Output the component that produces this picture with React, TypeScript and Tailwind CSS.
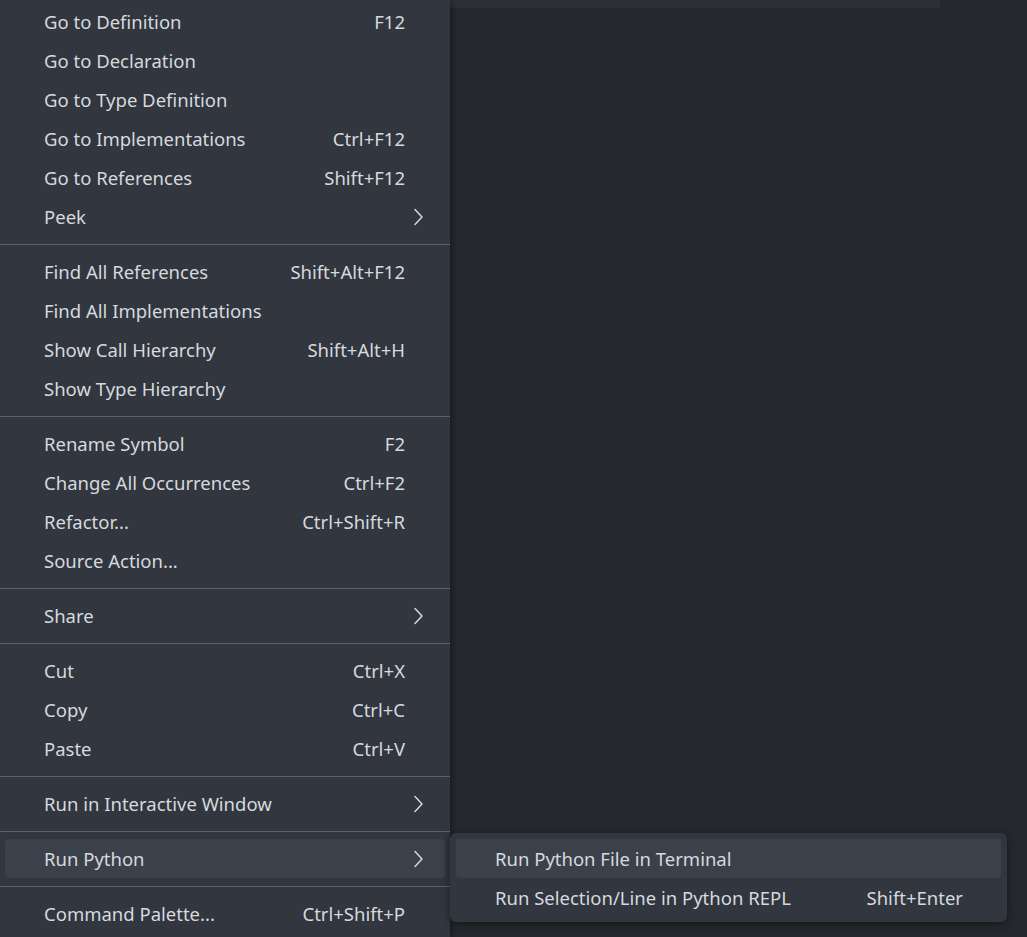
type Entry =
  | { label: string; keys?: string; sub?: boolean; active?: boolean }
  | "sep";

const items: Entry[] = [
  { label: "Go to Definition", keys: "F12" },
  { label: "Go to Declaration" },
  { label: "Go to Type Definition" },
  { label: "Go to Implementations", keys: "Ctrl+F12" },
  { label: "Go to References", keys: "Shift+F12" },
  { label: "Peek", sub: true },
  "sep",
  { label: "Find All References", keys: "Shift+Alt+F12" },
  { label: "Find All Implementations" },
  { label: "Show Call Hierarchy", keys: "Shift+Alt+H" },
  { label: "Show Type Hierarchy" },
  "sep",
  { label: "Rename Symbol", keys: "F2" },
  { label: "Change All Occurrences", keys: "Ctrl+F2" },
  { label: "Refactor...", keys: "Ctrl+Shift+R" },
  { label: "Source Action..." },
  "sep",
  { label: "Share", sub: true },
  "sep",
  { label: "Cut", keys: "Ctrl+X" },
  { label: "Copy", keys: "Ctrl+C" },
  { label: "Paste", keys: "Ctrl+V" },
  "sep",
  { label: "Run in Interactive Window", sub: true },
  "sep",
  { label: "Run Python", sub: true, active: true },
  "sep",
  { label: "Command Palette...", keys: "Ctrl+Shift+P" },
];

function Chevron() {
  return (
    <svg width="11" height="18" viewBox="0 0 11 18" fill="none">
      <path
        d="M2 1.5 L9 9 L2 16.5"
        stroke="#d6d9de"
        strokeWidth="1.5"
        strokeLinecap="round"
        strokeLinejoin="round"
      />
    </svg>
  );
}

function MenuRow({
  label,
  keys,
  sub,
  active,
}: {
  label: string;
  keys?: string;
  sub?: boolean;
  active?: boolean;
}) {
  return (
    <div
      className={`mx-[5px] h-[39px] flex items-center justify-between pl-[39px] rounded-[4px] ${
        sub ? "pr-[21px]" : "pr-[40px]"
      } ${active ? "bg-[#3b414b]" : ""}`}
    >
      <span>{label}</span>
      {sub ? <Chevron /> : keys && <span>{keys}</span>}
    </div>
  );
}

export default function App() {
  return (
    <div
      className="relative w-[1027px] h-[937px] overflow-hidden flex bg-[#25292e] text-[#d6d9de] text-[18.5px]"
      style={{ fontFamily: '"Noto Sans", "Open Sans", sans-serif' }}
    >
      <div className="w-[450px] h-full bg-[#31363f] pt-[2px] shadow-[2px_0_6px_rgba(0,0,0,0.35)] z-10">
        {items.map((item, i) =>
          item === "sep" ? (
            <div key={i} className="h-[16px] flex items-center">
              <div className="w-full h-px bg-[#5c6066]" />
            </div>
          ) : (
            <MenuRow key={i} {...item} />
          )
        )}
      </div>
      <div className="flex-1">
        <div className="w-[490px] h-[8px] bg-[#2b3038]" />
      </div>

      {/* submenu of Run Python */}
      <div className="absolute left-[450px] top-[833px] w-[557px] bg-[#31363f] rounded-[6px] p-[6px] pb-[5px] shadow-[0_2px_8px_rgba(0,0,0,0.45)] z-20">
        <div className="h-[39px] flex items-center justify-between pl-[39px] pr-[38px] rounded-[4px] bg-[#3b414b]">
          <span>Run Python File in Terminal</span>
        </div>
        <div className="h-[39px] flex items-center justify-between pl-[39px] pr-[38px]">
          <span>Run Selection/Line in Python REPL</span>
          <span>Shift+Enter</span>
        </div>
      </div>
    </div>
  );
}
